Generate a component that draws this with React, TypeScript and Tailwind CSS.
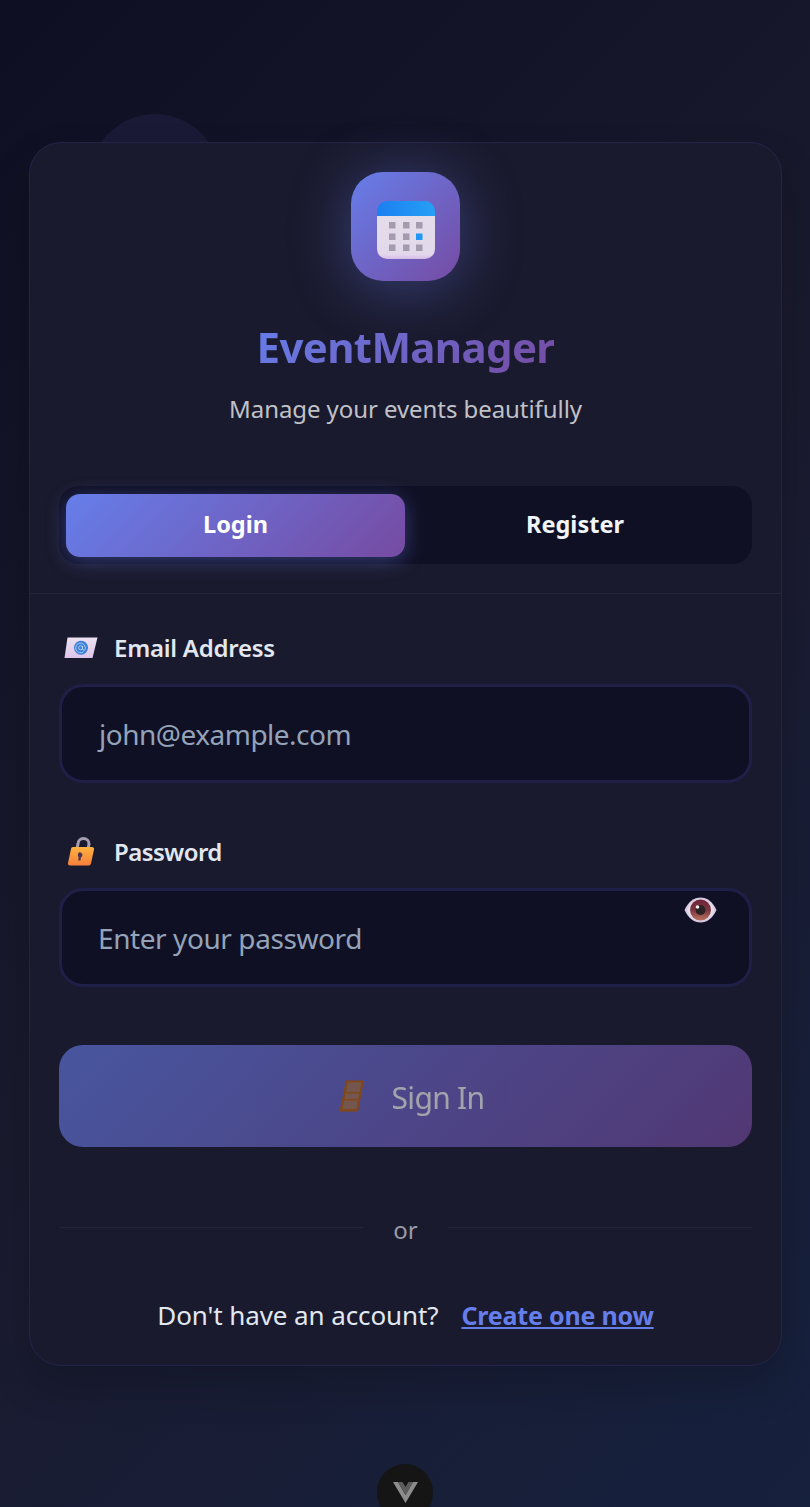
const font = { fontFamily: '"Noto Sans", sans-serif' };

const CalendarIcon = () => (
  <svg width="58" height="58" viewBox="0 0 58 58">
    <defs>
      <linearGradient id="calBody" x1="0" y1="0" x2="0" y2="1">
        <stop offset="0" stopColor="#e4dde9" />
        <stop offset="0.9" stopColor="#e2d8ea" />
        <stop offset="1" stopColor="#d6bce8" />
      </linearGradient>
      <linearGradient id="calTop" x1="0" y1="0" x2="1" y2="0">
        <stop offset="0" stopColor="#1b7ff0" />
        <stop offset="1" stopColor="#26a0f6" />
      </linearGradient>
    </defs>
    <path d="M0 12h58v36a10 10 0 0 1-10 10H10A10 10 0 0 1 0 48z" fill="url(#calBody)" />
    <path d="M10 0h38a10 10 0 0 1 10 10v5H0v-5A10 10 0 0 1 10 0z" fill="url(#calTop)" />
    {[21, 32.5, 43.5].map((y) =>
      [12, 26, 39].map((x) => (
        <rect key={`${x}-${y}`} x={x} y={y} width="6.5" height="6.5" fill={x === 39 && y === 32.5 ? "#2196f3" : "#a39cae"} />
      ))
    )}
  </svg>
);

const MailIcon = () => (
  <svg width="34" height="22" viewBox="0 0 34 22">
    <defs>
      <linearGradient id="mailBody" x1="0" y1="0" x2="0" y2="1">
        <stop offset="0" stopColor="#ece2f0" />
        <stop offset="1" stopColor="#dcc4ea" />
      </linearGradient>
    </defs>
    <path d="M3.500 0.500H33.500l-5 20.500H0.500z" fill="url(#mailBody)" />
    <circle cx="17" cy="10.800" r="7" fill="#3a7fd8" />
    <circle cx="16.500" cy="10.800" r="2" fill="none" stroke="#b9d3f5" strokeWidth="0.9" />
    <path d="M18.500 8.800v3a1.400 1.400 0 0 0 2.800 0v-.8a4.800 4.800 0 1 0-1.800 3.700" fill="none" stroke="#b9d3f5" strokeWidth="0.9" />
  </svg>
);

const LockIcon = () => (
  <svg width="28" height="30" viewBox="0 0 28 30">
    <defs>
      <linearGradient id="lockBody" x1="0" y1="0" x2="0" y2="1">
        <stop offset="0" stopColor="#fdb23e" />
        <stop offset="1" stopColor="#f77f3c" />
      </linearGradient>
    </defs>
    <path d="M10 11l1-4a5.500 5.500 0 0 1 11 0l-1 5" fill="none" stroke="#a49eb0" strokeWidth="3" />
    <path d="M6 10h19a2 2 0 0 1 2 2.500l-3 14a2.500 2.500 0 0 1-2.500 2H3a2 2 0 0 1-2-2.500l3-14A2 2 0 0 1 6 10z" fill="url(#lockBody)" />
    <path d="M12 15.500a2.700 2.700 0 0 1 3.500 2.700 2.800 2.800 0 0 1-1.500 2l-.6 3.300h-2.200l.5-3.300a2.600 2.600 0 0 1-.8-2.200 2.800 2.800 0 0 1 1.100-2.500z" fill="#4a3350" />
  </svg>
);

const EyeIcon = () => (
  <svg width="33" height="26" viewBox="0 0 33 26">
    <defs>
      <radialGradient id="eyeWhite" cx="0.5" cy="0.5" r="0.6">
        <stop offset="0.5" stopColor="#f4eef6" />
        <stop offset="1" stopColor="#b9a6c8" />
      </radialGradient>
      <linearGradient id="eyeIris" x1="0" y1="0" x2="0" y2="1">
        <stop offset="0" stopColor="#6e2338" />
        <stop offset="0.5" stopColor="#7d3540" />
        <stop offset="1" stopColor="#b9745f" />
      </linearGradient>
    </defs>
    <path d="M0.500 13C4 5 10 0.500 16.500 0.500S29 5 32.500 13C29 21 23 25.500 16.500 25.500S4 21 0.500 13z" fill="url(#eyeWhite)" />
    <circle cx="16.500" cy="13" r="10.500" fill="url(#eyeIris)" />
    <circle cx="16.500" cy="13" r="5" fill="#2b2226" />
    <circle cx="13.500" cy="10" r="1.800" fill="#f4eef0" />
  </svg>
);

const DoorIcon = () => (
  <svg width="26" height="32" viewBox="0 0 26 32">
    <path d="M7 0.500h18l-6 31H0.500z" fill="#c4680c" />
    <path d="M8.800 2.500h13.400l-1.700 9.500H7z M6.700 13.500h13.500l-1.100 5.500H5.600z M5.300 20.500h13.500l-1.500 8.500H3.500z" fill="#b27f66" />
  </svg>
);

const VueIcon = () => (
  <svg width="25" height="21" viewBox="0 0 25 21">
    <path d="M0 0h5l7.500 13L20 0h5L12.500 21z" fill="#8c8c8c" />
    <path d="M5 0h4.500l3 5 3-5H20l-7.500 13z" fill="#5c5c5c" />
  </svg>
);

const App = () => {
  return (
    <div
      className="relative min-h-[1507px] overflow-hidden bg-[linear-gradient(135deg,#0f0f23_0%,#1a1a2e_50%,#16213e_100%)] pl-[29px] pr-[28px] pt-[142px]"
      style={font}
    >
      <div className="absolute left-[90px] top-[114px] h-[130px] w-[130px] rounded-full bg-[#1a1a36]" />

      <div className="relative rounded-[32px] border border-[#24244a] bg-[#1a1a2e] shadow-[0_20px_40px_rgba(0,0,0,0.18)]">
        <div className="flex flex-col items-center border-b border-[#24243d] px-[29px] pb-[29px] pt-[29px]">
          <div className="flex h-[109px] w-[109px] items-center justify-center rounded-[32px] bg-[linear-gradient(135deg,#667eea,#764ba2)] pl-px pt-[7px] shadow-[0_6px_60px_rgba(102,126,234,0.4)]">
            <CalendarIcon />
          </div>
          <h1 className="mt-[37px] bg-[linear-gradient(135deg,#667eea,#764ba2)] bg-clip-text text-[42px] font-bold leading-[58px] tracking-[-0.65px] text-transparent">
            EventManager
          </h1>
          <p className="mt-[16px] text-[24px] leading-[34px] tracking-[-0.07px] text-[#c1c1c8]">Manage your events beautifully</p>

          <div className="mt-[60px] flex h-[78px] w-full items-center rounded-[20px] bg-[#101025] p-[7px]">
            <div className="flex h-[63px] w-[339px] items-center justify-center rounded-[14px] bg-[linear-gradient(135deg,#667eea,#764ba2)] text-[23.5px] font-bold text-white shadow-[0_4px_20px_rgba(102,126,234,0.4)]">
              Login
            </div>
            <div className="flex h-[63px] flex-1 items-center justify-center text-[23.5px] font-bold text-[#f1f5f9]">Register</div>
          </div>
        </div>

        <div className="px-[29px] pt-[36px]">
          <div className="flex h-[36px] items-center pl-[5px] text-[24px] font-semibold tracking-[-0.25px] text-[#e2e8f0]">
            <MailIcon />
            <span className="ml-[16px]">Email Address</span>
          </div>
          <div className="mt-[18px] flex h-[99px] items-center rounded-[24px] border-[3px] border-[#1f1f47] bg-[#101025] pl-[37px] text-[28px] tracking-[-0.5px] text-[#94a3b8]">
            john@example.com
          </div>

          <div className="mt-[51px] flex h-[36px] items-center pl-[8px] text-[24px] font-semibold tracking-[-0.55px] text-[#e2e8f0]">
            <LockIcon />
            <span className="ml-[19px]">Password</span>
          </div>
          <div className="relative mt-[18px] flex h-[99px] items-center rounded-[24px] border-[3px] border-[#1f1f47] bg-[#101025] pl-[36px] text-[28px] tracking-[-0.42px] text-[#94a3b8]">
            Enter your password
            <span className="absolute right-[32px] top-[6px]">
              <EyeIcon />
            </span>
          </div>

          <div className="mt-[58px] flex h-[102px] items-center justify-center rounded-[24px] bg-[linear-gradient(135deg,#667eea,#764ba2)] pl-[12px] text-[30px] tracking-[-0.7px] text-white opacity-60">
            <DoorIcon />
            <span className="ml-[27px] pt-[2px]">Sign In</span>
          </div>

          <div className="mt-[64px] flex h-[38px] items-center text-[24px] text-[#9a9aa6]">
            <div className="h-px flex-1 -translate-y-[3px] bg-[#24243d]" />
            <span className="px-[30px]">or</span>
            <div className="h-px flex-1 -translate-y-[3px] bg-[#24243d]" />
          </div>

          <div className="mt-[48px] flex h-[40px] items-center justify-center pb-[3px] text-[26px] tracking-[-0.1px] text-[#e2e8f0]">
            <span>Don't have an account?</span>
            <a className="ml-[23px] text-[25px] font-bold tracking-[-0.2px] text-[#667eea] underline" href="#">
              Create one now
            </a>
          </div>
          <div className="h-[28px]" />
        </div>
      </div>

      <div className="absolute bottom-[-14px] left-[377px] flex h-[57px] w-[56px] items-center justify-center rounded-full bg-[#151515]">
        <VueIcon />
      </div>
    </div>
  );
};

export default App;
